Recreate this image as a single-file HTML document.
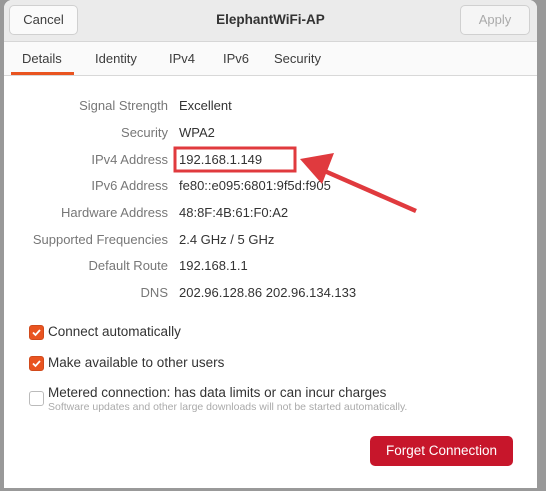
<!DOCTYPE html><html><head><style>
body{margin:0;width:546px;height:491px;background:#999;position:relative;overflow:hidden;font-family:"Liberation Sans",sans-serif;font-size:13px;color:#3d3d3d}
.dlg{position:absolute;left:4px;top:0;width:533px;height:488px;background:#fff;border-radius:8px 8px 0 0;overflow:hidden}
.hdr{position:absolute;left:0;top:0;width:100%;height:41px;background:#ebebeb;border-bottom:1px solid #d6d6d6}
.btn{position:absolute;top:5px;height:28px;border:1px solid #d0d0d0;border-radius:5px;background:#fafafa;line-height:28px;text-align:center}
.title{position:absolute;top:0;left:0;width:100%;text-align:center;line-height:39px;font-weight:bold;color:#333;font-size:13.5px}
.tabs{position:absolute;top:42px;left:0;width:100%;height:33px;background:#fafafa;border-bottom:1px solid #d8d8d8}
.tab{position:absolute;top:9px}
.lbl{position:absolute;right:369px;color:#777;white-space:nowrap}
.val{position:absolute;left:175px;color:#333;white-space:nowrap}
.cb{position:absolute;left:25px;width:13px;height:13px;border-radius:3px;background:#e95420;border:1px solid #d14a1c}
.cbt{position:absolute;left:44px;color:#333;font-size:13.5px}
</style></head><body>
<div class="dlg">
<div class="hdr">
<div class="title">ElephantWiFi-AP</div>
<div class="btn" style="left:5px;width:67px">Cancel</div>
<div class="btn" style="left:456px;width:68px;color:#aaa;background:#f5f5f5">Apply</div>
</div>
<div class="tabs">
<div class="tab" style="left:18px">Details</div>
<div class="tab" style="left:91px">Identity</div>
<div class="tab" style="left:165px">IPv4</div>
<div class="tab" style="left:219px">IPv6</div>
<div class="tab" style="left:270px">Security</div>
<div style="position:absolute;left:7px;top:30px;width:63px;height:3px;background:#e95420"></div>
</div>
<div class="lbl" style="top:98px">Signal Strength</div><div class="val" style="top:98px">Excellent</div>
<div class="lbl" style="top:125px">Security</div><div class="val" style="top:125px">WPA2</div>
<div class="lbl" style="top:152px">IPv4 Address</div><div class="val" style="top:152px">192.168.1.149</div>
<div class="lbl" style="top:178px">IPv6 Address</div><div class="val" style="top:178px">fe80::e095:6801:9f5d:f905</div>
<div class="lbl" style="top:205px">Hardware Address</div><div class="val" style="top:205px">48:8F:4B:61:F0:A2</div>
<div class="lbl" style="top:232px">Supported Frequencies</div><div class="val" style="top:232px">2.4 GHz / 5 GHz</div>
<div class="lbl" style="top:258px">Default Route</div><div class="val" style="top:258px">192.168.1.1</div>
<div class="lbl" style="top:285px">DNS</div><div class="val" style="top:285px">202.96.128.86 202.96.134.133</div>
<div class="cb" style="top:325px"><svg width="13" height="13" style="position:absolute;left:0;top:0"><path d="M3 6.5l2.5 2.5 4.5-5" stroke="#fff" stroke-width="1.8" fill="none"/></svg></div>
<div class="cbt" style="top:324px">Connect automatically</div>
<div class="cb" style="top:356px"><svg width="13" height="13" style="position:absolute;left:0;top:0"><path d="M3 6.5l2.5 2.5 4.5-5" stroke="#fff" stroke-width="1.8" fill="none"/></svg></div>
<div class="cbt" style="top:355px">Make available to other users</div>
<div class="cb" style="top:391px;background:#fff;border-color:#bbb"></div>
<div class="cbt" style="top:385px">Metered connection: has data limits or can incur charges</div>
<div style="position:absolute;left:44px;top:401px;font-size:10.5px;color:#aaa">Software updates and other large downloads will not be started automatically.</div>
<div style="position:absolute;left:366px;top:436px;width:143px;height:30px;background:#c7162b;border-radius:5px;color:#fff;text-align:center;line-height:30px;font-size:13.5px">Forget Connection</div>
</div>
<svg width="546" height="491" style="position:absolute;left:0;top:0">
<rect x="175" y="148" width="120" height="23" fill="none" stroke="#e03a3e" stroke-width="3"/>
<line x1="416" y1="211" x2="320" y2="169" stroke="#e03a3e" stroke-width="4.5"/>
<polygon points="300,159 334,153 322,184" fill="#e03a3e"/>
</svg>
</body></html>
